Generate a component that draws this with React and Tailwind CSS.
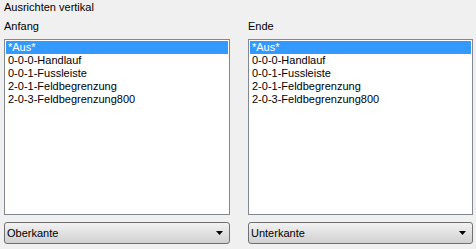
import React from 'react'

const items = [
  '*Aus*',
  '0-0-0-Handlauf',
  '0-0-1-Fussleiste',
  '2-0-1-Feldbegrenzung',
  '2-0-3-Feldbegrenzung800',
]

function ListBox({ selected = 0 }) {
  return (
    <div className="h-[176px] border border-[#828790] bg-white p-px">
      {items.map((item, i) => (
        <div
          key={item}
          className={
            i === selected
              ? 'h-[13px] leading-[13px] bg-[#3399ff] text-white pl-[2px]'
              : 'h-[13px] leading-[13px] text-black pl-[2px]'
          }
        >
          {item}
        </div>
      ))}
    </div>
  )
}

function Dropdown({ value }) {
  return (
    <div className="mt-[7px] flex h-[22px] items-center justify-between rounded-[3px] border border-[#707070] bg-gradient-to-b from-[#f2f2f2] to-[#d0d0d0] pl-[2px] pr-[6px]">
      <span className="leading-[13px] text-black">{value}</span>
      <svg width="7" height="4" viewBox="0 0 7 4">
        <path d="M0 0h7L3.5 4z" fill="#000" />
      </svg>
    </div>
  )
}

function Column({ label, value }) {
  return (
    <div className="flex flex-col">
      <div className="h-[20px] leading-[13px] pt-[1px]">{label}</div>
      <ListBox />
      <Dropdown value={value} />
    </div>
  )
}

export default function App() {
  return (
    <div
      className="h-[249px] w-[476px] bg-[#f0f0f0] pl-[4px] pr-[5px] pt-[1px] text-[11px] text-black"
      style={{ fontFamily: '"Liberation Sans", Arial, sans-serif' }}
    >
      <div className="h-[18px] leading-[13px]">Ausrichten vertikal</div>
      <div className="grid grid-cols-[226px_225px] gap-[18px]">
        <Column label="Anfang" value="Oberkante" />
        <Column label="Ende" value="Unterkante" />
      </div>
    </div>
  )
}
